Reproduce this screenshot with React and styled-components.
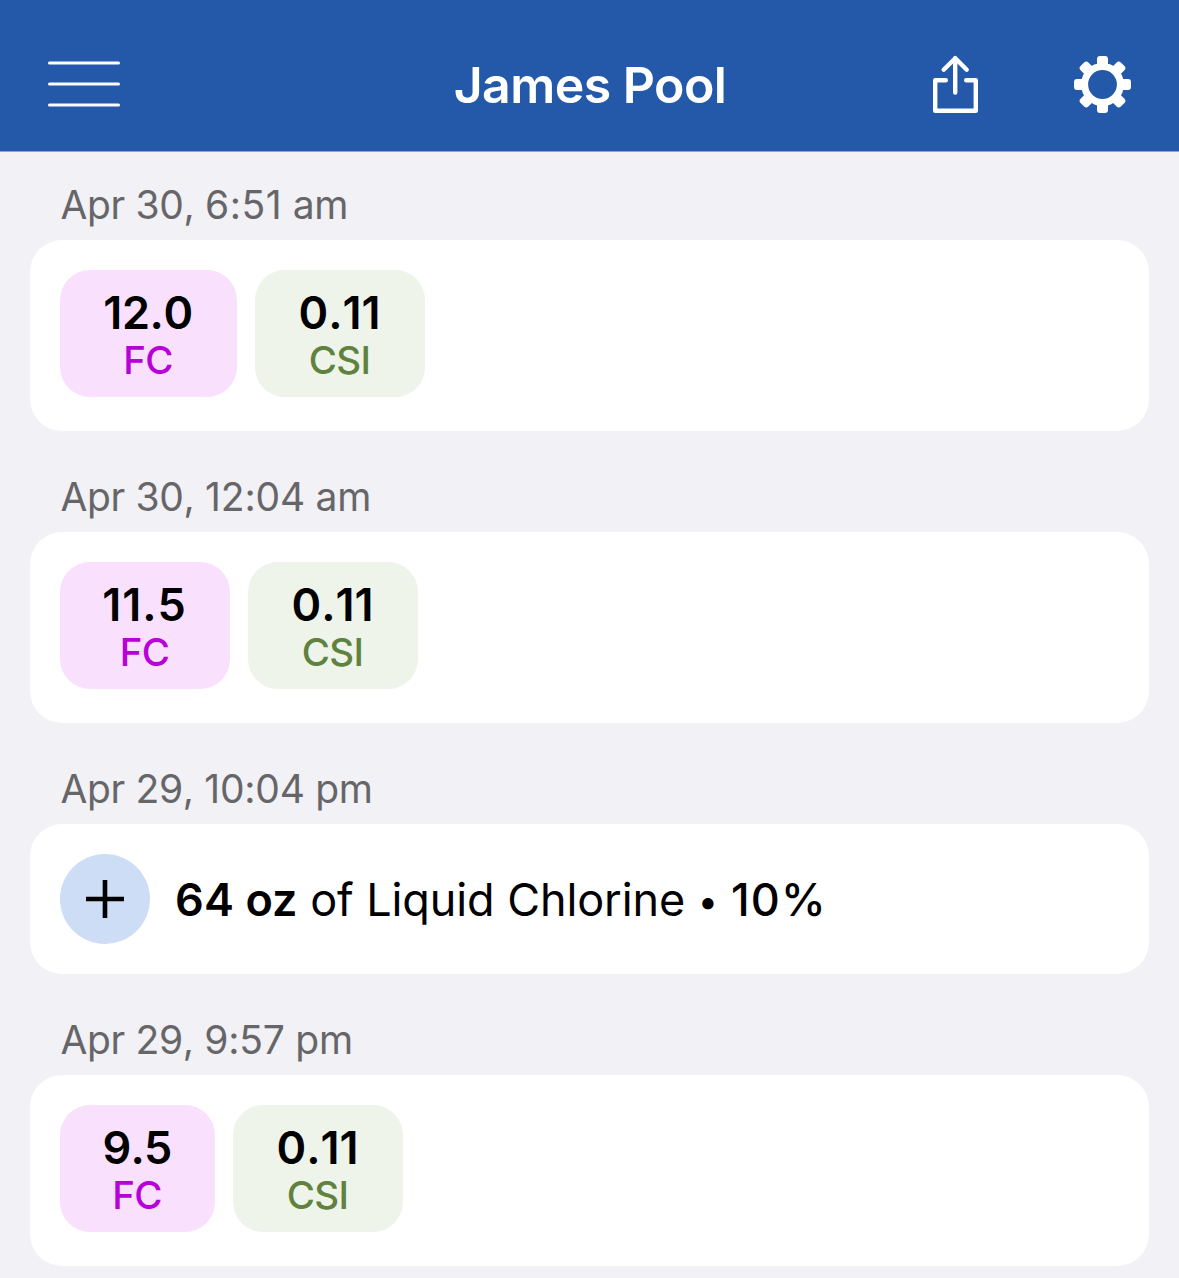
import React from "react";
import styled, { createGlobalStyle } from "styled-components";

const GlobalStyle = createGlobalStyle`
  *, *::before, *::after { box-sizing: border-box; }
  body {
    margin: 0;
    background: #f1f1f6;
    font-family: Inter, "Liberation Sans", sans-serif;
    color: #000;
    overflow: hidden;
  }
`;

const Screen = styled.div`
  display: flex;
  flex-direction: column;
  height: 1278px;
  overflow: hidden;
`;

const Header = styled.header`
  display: grid;
  grid-template-columns: 1fr auto 1fr;
  align-items: center;
  flex: none;
  height: 152px;
  padding: 18px 45px 1px 46px;
  background: #2459aa;
  border-bottom: 1px solid #8ba5d0;
`;

const Title = styled.h1`
  margin: 0;
  padding-top: 2px;
  font-size: 50px;
  line-height: 60px;
  font-weight: 600;
  letter-spacing: -0.55px;
  color: #fff;
`;

const IconButton = styled.button`
  display: flex;
  padding: 0;
  border: 0;
  background: none;
  color: #fff;
`;

const Actions = styled.div`
  display: flex;
  justify-content: flex-end;
  gap: 90px;
`;

const Feed = styled.main`
  display: flex;
  flex-direction: column;
  padding: 0 30px;
`;

const Entry = styled.section`
  display: flex;
  flex-direction: column;
  padding-top: 29px;
  & + & { padding-top: 42px; }
`;

const Stamp = styled.h2`
  margin: 0;
  padding: 0 0 11px 30.5px;
  font-size: 39px;
  line-height: 48px;
  font-weight: 400;
  font-kerning: none;
  letter-spacing: -0.35px;
  color: #666669;
`;

const Clock = styled.span`
  letter-spacing: ${(p) => p.$tracking}px;
`;

const Card = styled.div`
  display: flex;
  align-items: ${(p) => (p.$center ? "center" : "flex-start")};
  gap: ${(p) => (p.$center ? "25px" : "18px")};
  height: ${(p) => (p.$center ? "150px" : "191px")};
  padding: 30px;
  border-radius: 32px;
  background: #fff;
`;

const Chip = styled.div`
  display: flex;
  flex-direction: column;
  align-items: center;
  width: ${(p) => p.$width}px;
  height: 127px;
  padding: 17px 1px 0 0;
  border-radius: 30px;
  background: ${(p) => (p.$tone === "fc" ? "#f9e1fe" : "#eef4e9")};
`;

const Value = styled.span`
  font-size: 45px;
  line-height: 52px;
  font-weight: 600;
  font-kerning: none;
  letter-spacing: ${(p) => p.$tracking}px;
`;

const Label = styled.span`
  font-size: 38.5px;
  line-height: 42px;
  font-weight: 500;
  letter-spacing: -0.7px;
  color: ${(p) => (p.$tone === "fc" ? "#b800d8" : "#5f823f")};
`;

const Badge = styled.div`
  display: flex;
  align-items: center;
  justify-content: center;
  width: 90px;
  height: 90px;
  border-radius: 50%;
  background: #ccddf5;
`;

const Dose = styled.p`
  margin: 0;
  padding-top: 2px;
  font-size: 45px;
  line-height: 54px;
  letter-spacing: -0.1px;
  white-space: nowrap;
`;

const Strong = styled.strong`
  font-weight: 600;
  letter-spacing: 0.1px;
`;

const Bullet = styled.span`
  font-size: 36px;
  line-height: 1;
  vertical-align: 2px;
`;

const Medium = styled.span`
  font-weight: 500;
  margin-left: 0.7px;
  letter-spacing: 1.1px;
`;

const MenuIcon = () => (
  <svg width="76" height="52" viewBox="0 0 76 52" fill="none" stroke="currentColor" strokeWidth="3" strokeLinecap="round">
    <path d="M3.5 5H72.5M3.5 26H72.5M3.5 47H72.5" />
  </svg>
);

const ShareIcon = () => (
  <svg width="52" height="64" viewBox="0 0 52 64" fill="none" stroke="currentColor" strokeWidth="4.4" strokeLinecap="round" strokeLinejoin="round">
    <path d="M17.8 28.2H7.2V58.8H47.8V28.2H38.2" />
    <path d="M27.2 40.5V6.4" />
    <path d="M15.7 17.7 27.3 6.2 38.7 17.7" />
  </svg>
);

const GearIcon = () => (
  <svg width="64" height="64" viewBox="-32.5 -32.5 64 64" fill="currentColor">
    {[0, 45, 90, 135].map((angle) => (
      <g key={angle} transform={`rotate(${angle})`}>
        <rect x="-5.5" y="-28.5" width="11" height="12" rx="3" />
        <rect x="-5.5" y="16.5" width="11" height="12" rx="3" />
      </g>
    ))}
    <circle r="17.9" fill="none" stroke="currentColor" strokeWidth="7" />
  </svg>
);

const PlusIcon = () => (
  <svg width="40" height="40" viewBox="0 0 40 40" fill="none" stroke="#000" strokeWidth="4.6">
    <path d="M20 1V39M1 20H39" />
  </svg>
);

const entries = [
  { day: "Apr 30,", clock: "6:51", half: "am", clockTracking: 0.5, fc: "12.0", fcWidth: 177, fcTracking: -0.4, csi: "0.11" },
  { day: "Apr 30,", clock: "12:04", half: "am", clockTracking: -0.15, fc: "11.5", fcWidth: 170, fcTracking: 0.9, csi: "0.11" },
  { day: "Apr 29,", clock: "10:04", half: "pm", clockTracking: -0.25, dose: { amount: "64 oz", product: "Liquid Chlorine", strength: "10%" } },
  { day: "Apr 29,", clock: "9:57", half: "pm", clockTracking: -0.2, fc: "9.5", fcWidth: 155, fcTracking: -0.8, csi: "0.11" },
];

const Reading = ({ tone, value, label, width, tracking }) => (
  <Chip $tone={tone} $width={width}>
    <Value $tracking={tracking}>{value}</Value>
    <Label $tone={tone}>{label}</Label>
  </Chip>
);

export default function App() {
  return (
    <Screen>
      <GlobalStyle />
      <Header>
        <IconButton aria-label="Menu"><MenuIcon /></IconButton>
        <Title>James Pool</Title>
        <Actions>
          <IconButton aria-label="Share"><ShareIcon /></IconButton>
          <IconButton aria-label="Settings"><GearIcon /></IconButton>
        </Actions>
      </Header>
      <Feed>
        {entries.map((entry) => (
          <Entry key={entry.day + entry.clock}>
            <Stamp>
              {entry.day} <Clock $tracking={entry.clockTracking}>{entry.clock}</Clock> {entry.half}
            </Stamp>
            {entry.dose ? (
              <Card $center>
                <Badge><PlusIcon /></Badge>
                <Dose>
                  <Strong>{entry.dose.amount}</Strong> of {entry.dose.product} <Bullet>•</Bullet> <Medium>{entry.dose.strength}</Medium>
                </Dose>
              </Card>
            ) : (
              <Card>
                <Reading tone="fc" value={entry.fc} label="FC" width={entry.fcWidth} tracking={entry.fcTracking} />
                <Reading tone="csi" value={entry.csi} label="CSI" width={170} tracking={0} />
              </Card>
            )}
          </Entry>
        ))}
      </Feed>
    </Screen>
  );
}
